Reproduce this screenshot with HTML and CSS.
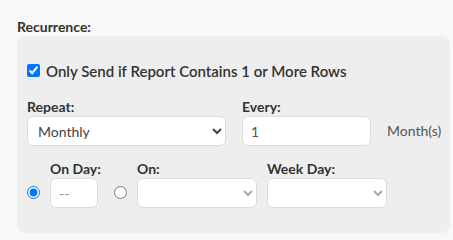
FILE: index.html
```html
<!DOCTYPE html>
<html lang="en">
<head>
  <meta charset="UTF-8" />
  <title>Recurrence</title>
  <link rel="stylesheet" href="styles.css">
</head>
<body>

<div class="section">
  <div class="title">Recurrence:</div>
  <div class="box">
    <label class="check-row">
      <input type="checkbox" checked />
      <span>Only Send if Report Contains 1 or More Rows</span>
    </label>

    <div class="row">
      <div class="field">
        <div class="label">Repeat:</div>
        <select class="repeat">
          <option>Monthly</option>
          <option>Weekly</option>
          <option>Daily</option>
        </select>
      </div>
      <div class="field">
        <div class="label">Every:</div>
        <input type="text" class="every" value="1" />
      </div>
      <div class="unit">Month(s)</div>
    </div>

    <div class="row row-day">
      <input type="radio" name="mode" class="radio" checked />
      <div class="field field-day">
        <div class="label">On Day:</div>
        <input type="text" class="day" placeholder="--" />
      </div>
      <input type="radio" name="mode" class="radio radio-two" />
      <div class="field">
        <div class="label">On:</div>
        <select class="small"><option></option></select>
      </div>
      <div class="field">
        <div class="label">Week Day:</div>
        <select class="small"><option></option></select>
      </div>
    </div>
  </div>
</div>

</body>
</html>
```

FILE: styles.css
```css
* { box-sizing: border-box; }
body {
  margin: 0;
  background: #f8f8f8;
  font-family: Lato, 'Open Sans', sans-serif;
  color: #333;
}
.section {
  padding: 18px 3px 0 17px;
}
.title {
  font-size: 14px;
  font-weight: bold;
  line-height: 18px;
}
.box {
  background: #eeeeee;
  border-radius: 8px;
  padding: 28px 10px 25px 10px;
}
.check-row {
  display: flex;
  align-items: center;
  gap: 6px;
  height: 13px;
  font-size: 15px;
  font-weight: 600;
}
.check-row input {
  width: 13px;
  height: 13px;
  margin: 0;
  accent-color: #0075ff;
}
.row {
  display: flex;
  align-items: flex-end;
  gap: 16px;
  margin-top: 21px;
}
.row-day {
  margin-top: 14px;
  gap: 10px;
}
.label {
  font-size: 14px;
  font-weight: bold;
  line-height: 17px;
  margin-bottom: 1px;
  white-space: nowrap;
}
.field-day { width: 48px; }
select, input[type=text] {
  height: 30px;
  margin: 0;
  border: 1px solid #dcdcdc;
  border-radius: 6px;
  background: #fff;
  font-family: Lato, 'Open Sans', sans-serif;
  font-size: 14px;
  color: #555;
  padding: 0 8px;
}
select { padding-left: 6px; }
.repeat { width: 199px; color: #444; }
.every { width: 129px; }
.unit {
  font-size: 14px;
  color: #555;
  height: 30px;
  line-height: 30px;
}
.radio {
  width: 13px;
  height: 13px;
  margin: 0 0 9px 0;
  accent-color: #0075ff;
}
.radio-two { margin-left: 6px; }
.day { width: 48px; }
.day::placeholder { color: #999; }
.small {
  width: 120px;
  color: #aaa;
}
```
